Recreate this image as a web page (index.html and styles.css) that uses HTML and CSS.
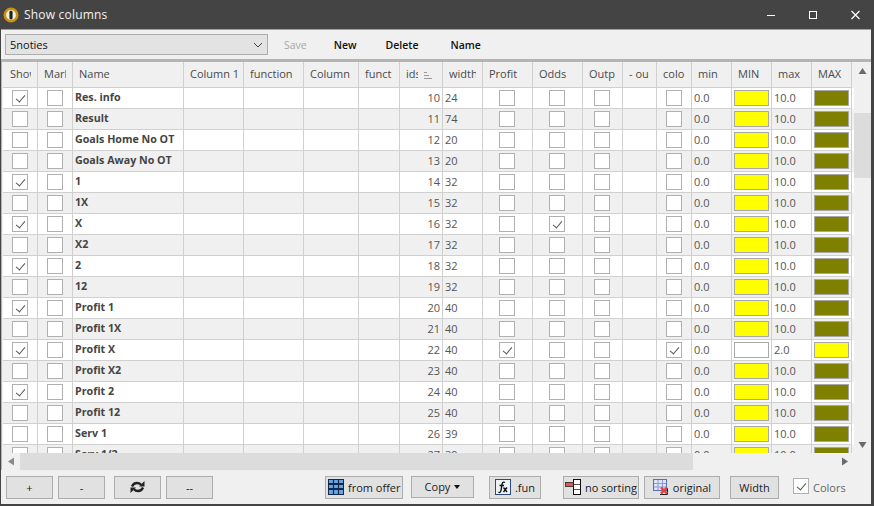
FILE: index.html
```html
<!DOCTYPE html>
<html lang="en">
<head>
<meta charset="utf-8">
<title>Show columns</title>
<link rel="stylesheet" href="styles.css">
</head>
<body>
<div class="window">
  <header class="titlebar">
    <svg class="appicon" width="16" height="16" viewBox="0 0 16 16"><circle cx="8" cy="8" r="6.2" fill="#f4f0e0" stroke="#c8920f" stroke-width="2.6"/><rect x="6.4" y="3.8" width="3.2" height="8.6" rx="1.4" fill="#222"/></svg>
    <span class="title">Show columns</span>
    <div class="winbtns">
      <svg width="9" height="10" viewBox="0 0 9 10"><path d="M0 5.500h8" stroke="#fff" fill="none"/></svg>
      <svg width="9" height="10" viewBox="0 0 9 10"><rect x=".5" y="1.500" width="7" height="7" stroke="#fff" fill="none"/></svg>
      <svg width="9" height="10" viewBox="0 0 9 10"><path d="M.5 1l8 8M8.500 1l-8 8" stroke="#fff" stroke-width="1.200" fill="none"/></svg>
    </div>
  </header>
  <div class="toolbar">
    <div class="combo"><span>5noties</span><svg width="10" height="6" viewBox="0 0 10 6"><path d="M1 1l4 4 4-4" stroke="#444" fill="none"/></svg></div>
    <span class="tool save">Save</span>
    <span class="tool new">New</span>
    <span class="tool del">Delete</span>
    <span class="tool nam">Name</span>
  </div>
  <div class="gridframe">
    <div class="gridmain">
      <div class="gridclip">
        <table class="grid">
          <colgroup>
            <col class="w35"><col class="w35"><col class="w111"><col class="w60"><col class="w60"><col class="w55"><col class="w41"><col class="w43"><col class="w40"><col class="w50"><col class="w50"><col class="w40"><col class="w34"><col class="w35"><col class="w40"><col class="w40"><col class="w40"><col class="w40">
          </colgroup>
          <thead>
            <tr><th><span>Show</span></th><th><span>Mark</span></th><th><span>Name</span></th><th class="wide"><span>Column 1</span></th><th><span>function</span></th><th><span>Column</span></th><th><span>funct</span></th><th class="ids"><span class="idt">ids</span><svg class="sort" width="9" height="7" viewBox="0 0 9 7"><path d="M0 .5h3M0 3.500h5M0 6.500h8" stroke="#999" fill="none"/></svg></th><th><span>width</span></th><th><span>Profit</span></th><th><span>Odds</span></th><th><span>Outp</span></th><th><span>- ou</span></th><th><span>colo</span></th><th><span>min</span></th><th><span>MIN</span></th><th><span>max</span></th><th><span>MAX</span></th></tr>
          </thead>
          <tbody>
            <tr><td><i class="cb on"></i></td><td><i class="cb"></i></td><td class="nm">Res. info</td><td></td><td></td><td></td><td></td><td class="r">10</td><td>24</td><td><i class="cb"></i></td><td><i class="cb"></i></td><td><i class="cb"></i></td><td></td><td><i class="cb"></i></td><td>0.0</td><td><i class="sw y"></i></td><td>10.0</td><td><i class="sw o"></i></td></tr>
            <tr><td><i class="cb"></i></td><td><i class="cb"></i></td><td class="nm">Result</td><td></td><td></td><td></td><td></td><td class="r">11</td><td>74</td><td><i class="cb"></i></td><td><i class="cb"></i></td><td><i class="cb"></i></td><td></td><td><i class="cb"></i></td><td>0.0</td><td><i class="sw y"></i></td><td>10.0</td><td><i class="sw o"></i></td></tr>
            <tr><td><i class="cb"></i></td><td><i class="cb"></i></td><td class="nm">Goals Home No OT</td><td></td><td></td><td></td><td></td><td class="r">12</td><td>20</td><td><i class="cb"></i></td><td><i class="cb"></i></td><td><i class="cb"></i></td><td></td><td><i class="cb"></i></td><td>0.0</td><td><i class="sw y"></i></td><td>10.0</td><td><i class="sw o"></i></td></tr>
            <tr><td><i class="cb"></i></td><td><i class="cb"></i></td><td class="nm">Goals Away No OT</td><td></td><td></td><td></td><td></td><td class="r">13</td><td>20</td><td><i class="cb"></i></td><td><i class="cb"></i></td><td><i class="cb"></i></td><td></td><td><i class="cb"></i></td><td>0.0</td><td><i class="sw y"></i></td><td>10.0</td><td><i class="sw o"></i></td></tr>
            <tr><td><i class="cb on"></i></td><td><i class="cb"></i></td><td class="nm">1</td><td></td><td></td><td></td><td></td><td class="r">14</td><td>32</td><td><i class="cb"></i></td><td><i class="cb"></i></td><td><i class="cb"></i></td><td></td><td><i class="cb"></i></td><td>0.0</td><td><i class="sw y"></i></td><td>10.0</td><td><i class="sw o"></i></td></tr>
            <tr><td><i class="cb"></i></td><td><i class="cb"></i></td><td class="nm">1X</td><td></td><td></td><td></td><td></td><td class="r">15</td><td>32</td><td><i class="cb"></i></td><td><i class="cb"></i></td><td><i class="cb"></i></td><td></td><td><i class="cb"></i></td><td>0.0</td><td><i class="sw y"></i></td><td>10.0</td><td><i class="sw o"></i></td></tr>
            <tr><td><i class="cb on"></i></td><td><i class="cb"></i></td><td class="nm">X</td><td></td><td></td><td></td><td></td><td class="r">16</td><td>32</td><td><i class="cb"></i></td><td><i class="cb on"></i></td><td><i class="cb"></i></td><td></td><td><i class="cb"></i></td><td>0.0</td><td><i class="sw y"></i></td><td>10.0</td><td><i class="sw o"></i></td></tr>
            <tr><td><i class="cb"></i></td><td><i class="cb"></i></td><td class="nm">X2</td><td></td><td></td><td></td><td></td><td class="r">17</td><td>32</td><td><i class="cb"></i></td><td><i class="cb"></i></td><td><i class="cb"></i></td><td></td><td><i class="cb"></i></td><td>0.0</td><td><i class="sw y"></i></td><td>10.0</td><td><i class="sw o"></i></td></tr>
            <tr><td><i class="cb on"></i></td><td><i class="cb"></i></td><td class="nm">2</td><td></td><td></td><td></td><td></td><td class="r">18</td><td>32</td><td><i class="cb"></i></td><td><i class="cb"></i></td><td><i class="cb"></i></td><td></td><td><i class="cb"></i></td><td>0.0</td><td><i class="sw y"></i></td><td>10.0</td><td><i class="sw o"></i></td></tr>
            <tr><td><i class="cb"></i></td><td><i class="cb"></i></td><td class="nm">12</td><td></td><td></td><td></td><td></td><td class="r">19</td><td>32</td><td><i class="cb"></i></td><td><i class="cb"></i></td><td><i class="cb"></i></td><td></td><td><i class="cb"></i></td><td>0.0</td><td><i class="sw y"></i></td><td>10.0</td><td><i class="sw o"></i></td></tr>
            <tr><td><i class="cb on"></i></td><td><i class="cb"></i></td><td class="nm">Profit 1</td><td></td><td></td><td></td><td></td><td class="r">20</td><td>40</td><td><i class="cb"></i></td><td><i class="cb"></i></td><td><i class="cb"></i></td><td></td><td><i class="cb"></i></td><td>0.0</td><td><i class="sw y"></i></td><td>10.0</td><td><i class="sw o"></i></td></tr>
            <tr><td><i class="cb"></i></td><td><i class="cb"></i></td><td class="nm">Profit 1X</td><td></td><td></td><td></td><td></td><td class="r">21</td><td>40</td><td><i class="cb"></i></td><td><i class="cb"></i></td><td><i class="cb"></i></td><td></td><td><i class="cb"></i></td><td>0.0</td><td><i class="sw y"></i></td><td>10.0</td><td><i class="sw o"></i></td></tr>
            <tr><td><i class="cb on"></i></td><td><i class="cb"></i></td><td class="nm">Profit X</td><td></td><td></td><td></td><td></td><td class="r">22</td><td>40</td><td><i class="cb on"></i></td><td><i class="cb"></i></td><td><i class="cb"></i></td><td></td><td><i class="cb on"></i></td><td>0.0</td><td><i class="sw w"></i></td><td>2.0</td><td><i class="sw y"></i></td></tr>
            <tr><td><i class="cb"></i></td><td><i class="cb"></i></td><td class="nm">Profit X2</td><td></td><td></td><td></td><td></td><td class="r">23</td><td>40</td><td><i class="cb"></i></td><td><i class="cb"></i></td><td><i class="cb"></i></td><td></td><td><i class="cb"></i></td><td>0.0</td><td><i class="sw y"></i></td><td>10.0</td><td><i class="sw o"></i></td></tr>
            <tr><td><i class="cb on"></i></td><td><i class="cb"></i></td><td class="nm">Profit 2</td><td></td><td></td><td></td><td></td><td class="r">24</td><td>40</td><td><i class="cb"></i></td><td><i class="cb"></i></td><td><i class="cb"></i></td><td></td><td><i class="cb"></i></td><td>0.0</td><td><i class="sw y"></i></td><td>10.0</td><td><i class="sw o"></i></td></tr>
            <tr><td><i class="cb"></i></td><td><i class="cb"></i></td><td class="nm">Profit 12</td><td></td><td></td><td></td><td></td><td class="r">25</td><td>40</td><td><i class="cb"></i></td><td><i class="cb"></i></td><td><i class="cb"></i></td><td></td><td><i class="cb"></i></td><td>0.0</td><td><i class="sw y"></i></td><td>10.0</td><td><i class="sw o"></i></td></tr>
            <tr><td><i class="cb"></i></td><td><i class="cb"></i></td><td class="nm">Serv 1</td><td></td><td></td><td></td><td></td><td class="r">26</td><td>39</td><td><i class="cb"></i></td><td><i class="cb"></i></td><td><i class="cb"></i></td><td></td><td><i class="cb"></i></td><td>0.0</td><td><i class="sw y"></i></td><td>10.0</td><td><i class="sw o"></i></td></tr>
            <tr><td><i class="cb"></i></td><td><i class="cb"></i></td><td class="nm">Serv 1/2</td><td></td><td></td><td></td><td></td><td class="r">27</td><td>39</td><td><i class="cb"></i></td><td><i class="cb"></i></td><td><i class="cb"></i></td><td></td><td><i class="cb"></i></td><td>0.0</td><td><i class="sw y"></i></td><td>10.0</td><td><i class="sw o"></i></td></tr>
          </tbody>
        </table>
      </div>
      <div class="vscroll">
        <svg width="9" height="6" viewBox="0 0 9 6"><path d="M4.500 0l4 6h-8z" fill="#6a6a6a"/></svg>
        <div class="vtrack"><div class="vthumb"></div></div>
        <svg width="9" height="6" viewBox="0 0 9 6"><path d="M.5 0h8l-4 6z" fill="#6a6a6a"/></svg>
      </div>
    </div>
    <div class="hscroll">
      <svg width="6" height="9" viewBox="0 0 6 9"><path d="M6 .5v8l-6-4z" fill="#8a8a8a"/></svg>
      <div class="htrack"><div class="hthumb"></div></div>
      <svg width="6" height="9" viewBox="0 0 6 9"><path d="M0 .5v8l6-4z" fill="#6a6a6a"/></svg>
    </div>
  </div>
  <div class="bottombar">
    <button class="btn small first">+</button>
    <button class="btn small">-</button>
    <button class="btn small refresh"><svg width="15" height="12" viewBox="0 0 15 12"><path d="M2 5.500C3 3 5 2 7 2c1.700 0 3 .6 4 1.800" stroke="#222" stroke-width="2.400" fill="none"/><path d="M14.500 0v5.500H9z" fill="#222"/><path d="M13 6.500C12 9 10 10 8 10c-1.700 0-3-.6-4-1.800" stroke="#222" stroke-width="2.400" fill="none"/><path d="M.5 12V6.500H6z" fill="#222"/></svg></button>
    <button class="btn small">--</button>
    <button class="btn offer"><svg width="16" height="16" viewBox="0 0 16 16"><rect width="16" height="16" fill="#14284e"/><path d="M1 1h14v3H1zM1 6h14v3H1zM1 11h14v4H1z" fill="#6aa5e4"/><path d="M5.500 0v16M10.500 0v16" stroke="#14284e" stroke-width="1.200"/></svg>from offer</button>
    <button class="btn copy">Copy<i class="caret"></i></button>
    <button class="btn fun"><svg width="16" height="16" viewBox="0 0 16 16"><rect x=".5" y=".5" width="15" height="15" fill="#eef1f8" stroke="#2c4a80"/><path d="M10 3.500C8.500 2.600 7.300 3.300 7 5.300L6 11.500c-.3 1.800-1.300 2.300-2.500 1.700M4.500 6.500h4.500M8.500 8.500l3.500 4.500M12 8.500L8.500 13" stroke="#111" stroke-width="1.400" fill="none"/></svg>.fun</button>
    <button class="btn nosort"><svg width="16" height="16" viewBox="0 0 16 16"><rect x="8.500" y=".5" width="7" height="15" fill="#fff" stroke="#111"/><path d="M9 5.500h6M9 10.500h6" stroke="#555"/><rect x=".5" y="3.500" width="8" height="4" fill="#e0584c" stroke="#222" stroke-width=".8"/></svg>no sorting</button>
    <button class="btn orig"><svg width="17" height="16" viewBox="0 0 17 16"><rect x=".5" y=".5" width="13" height="11" fill="#dde4f6" stroke="#5a6fb0"/><path d="M5 1v10M9.500 1v10M1 4.500h12M1 8h12" stroke="#8d9bd0"/><path d="M14.500 9v6.500H7" stroke="#222" fill="none"/><path d="M8 8.500l6 6M14 8.500l-6 6" stroke="#e8403c" stroke-width="2.400"/></svg>original</button>
    <button class="btn width">Width</button>
    <label class="colors"><i class="cb on"></i>Colors</label>
  </div>
</div>
</body>
</html>
```

FILE: styles.css
```css
* { box-sizing: border-box; }
html, body { margin: 0; height: 100%; }
body { font-family: "Open Sans", "Noto Sans", sans-serif; font-size: 11px; color: #222; background: #444; }
.window { width: 874px; height: 506px; display: flex; flex-direction: column; background: #f0f0f0; border: 1px solid #444; border-top: 0; border-right-width: 3px; border-bottom-width: 2px; overflow: hidden; }
.titlebar { height: 30px; flex: none; display: flex; align-items: center; background: #444444; color: #f2f2f2; padding-left: 2px; border-bottom: 1px solid #a0a0a0; }
.appicon { margin-right: 5px; }
.title { font-size: 12px; letter-spacing: .2px; }
.winbtns { margin-left: auto; display: flex; gap: 33px; padding-right: 11px; }
.toolbar { height: 29px; flex: none; display: flex; align-items: center; padding-left: 4px; color: #111; background: #f0f0f0; }
.combo { width: 263px; height: 21px; display: flex; align-items: center; justify-content: space-between; padding: 0 4px; background: #e3e3e3; border: 1px solid #adadad; color: #111; }
.tool { font-size: 10.500px; font-weight: 600; }
.save { margin-left: 16px; color: #a8a8a8; font-weight: 400; }
.new { margin-left: 27px; }
.del { margin-left: 29px; }
.nam { margin-left: 32px; }
.gridframe { flex: none; height: 411px; border-top: 3px solid #b4b4b4; border-bottom: 3px solid #b4b4b4; border-left: 1px solid #b4b4b4; background: #f0f0f0; display: flex; flex-direction: column; }
.gridmain { height: 391px; display: flex; flex: none; }
.gridclip { width: 851px; margin-left: 1px; overflow: hidden; flex: none; }
.grid { border-collapse: separate; border-spacing: 0; table-layout: fixed; width: 849px; }
.w35 { width: 35px; } .w111 { width: 111px; } .w60 { width: 60px; } .w55 { width: 55px; } .w41 { width: 41px; } .w43 { width: 43px; } .w40 { width: 40px; } .w50 { width: 50px; } .w34 { width: 34px; }
.grid th { height: 26px; font-weight: 400; color: #4a4a4a; background: #f0f0f0; border-right: 1px solid #d0d0d0; border-bottom: 1px solid #d0d0d0; padding: 0 6px 2px; text-align: left; white-space: nowrap; overflow: hidden; }
.grid th:first-child { padding-left: 7px; }
.grid th.wide { padding-right: 2px; }
.grid th > span { display: block; overflow: hidden; }
.grid th.ids { padding-right: 0; }
.grid th > .idt { display: inline-block; width: 12px; vertical-align: bottom; margin-right: 6px; }
.sort { vertical-align: middle; }
.grid td { height: 21px; padding: 0 2px; border-right: 1px solid #d0d0d0; border-bottom: 1px solid #d0d0d0; background: #fff; color: #555; text-align: left; white-space: nowrap; overflow: hidden; line-height: 1; }
.grid tbody td:nth-child(n+10):nth-child(-n+12) { padding: 0 3px 0 2px; }
.grid td:not(:has(i)) { padding-bottom: 2px; }
.grid tbody td:last-child { box-shadow: 2px 0 0 #fff; }
.grid tbody tr:nth-child(even) td { background: #f0f0f0; box-shadow: none; }
.grid td.nm { font-weight: 700; font-size: 10.700px; padding-left: 2px; color: #444; }
.grid td.r { text-align: right; }
.cb { display: block; position: relative; width: 16px; height: 16px; margin: 0 auto; background: #fff; border: 1px solid #b0b0b0; }
.cb.on::after { content: ""; position: absolute; left: 5px; top: 2px; width: 4px; height: 8px; border: solid #555; border-width: 0 1px 1px 0; transform: rotate(40deg); }
.sw { display: block; width: 35px; height: 16px; margin: 0 auto; border: 1px solid #a8a8a8; }
.y { background: #ffff00; }
.o { background: #808000; }
.w { background: #ffffff; }
.vscroll { width: 17px; flex: none; display: flex; flex-direction: column; align-items: center; justify-content: space-between; padding: 6px 0 5px; background: #f0f0f0; }
.vtrack { flex: 1; width: 100%; padding-top: 39px; }
.vthumb { height: 65px; width: 100%; background: #dcdcdc; }
.hscroll { height: 17px; flex: none; display: flex; align-items: center; padding: 0 23px 0 6px; background: #f0f0f0; }
.htrack { flex: 1; height: 100%; padding-left: 6px; }
.hthumb { width: 673px; height: 100%; background: #dcdcdc; }
.bottombar { flex: 1; display: flex; align-items: center; padding-left: 5px; background: #f0f0f0; }
.btn { height: 23px; padding: 0; margin: 0; display: flex; align-items: center; justify-content: center; gap: 4px; background: #e1e1e1; border: 1px solid #adadad; font: inherit; color: #222; }
.small { width: 47px; margin-right: 5px; }
.refresh { margin-left: 4px; }
.offer { width: 78px; margin-left: 107px; padding-left: 2px; justify-content: flex-start; }
.copy { width: 63px; height: 22px; margin: 0 0 1px 8px; }
.caret { display: inline-block; margin-top: 1px; border: solid transparent; border-width: 4px 3.500px 0; border-top-color: #111; }
.fun { width: 52px; margin-left: 15px; }
.nosort { width: 76px; margin-left: 22px; padding-left: 1px; gap: 4px; justify-content: flex-start; }
.orig { width: 76px; margin-left: 5px; gap: 3px; }
.width { width: 49px; margin-left: 10px; }
.colors { display: flex; align-items: center; gap: 4px; margin-left: 14px; color: #666; }
.colors .cb { margin: 0 0 2px; }
```
